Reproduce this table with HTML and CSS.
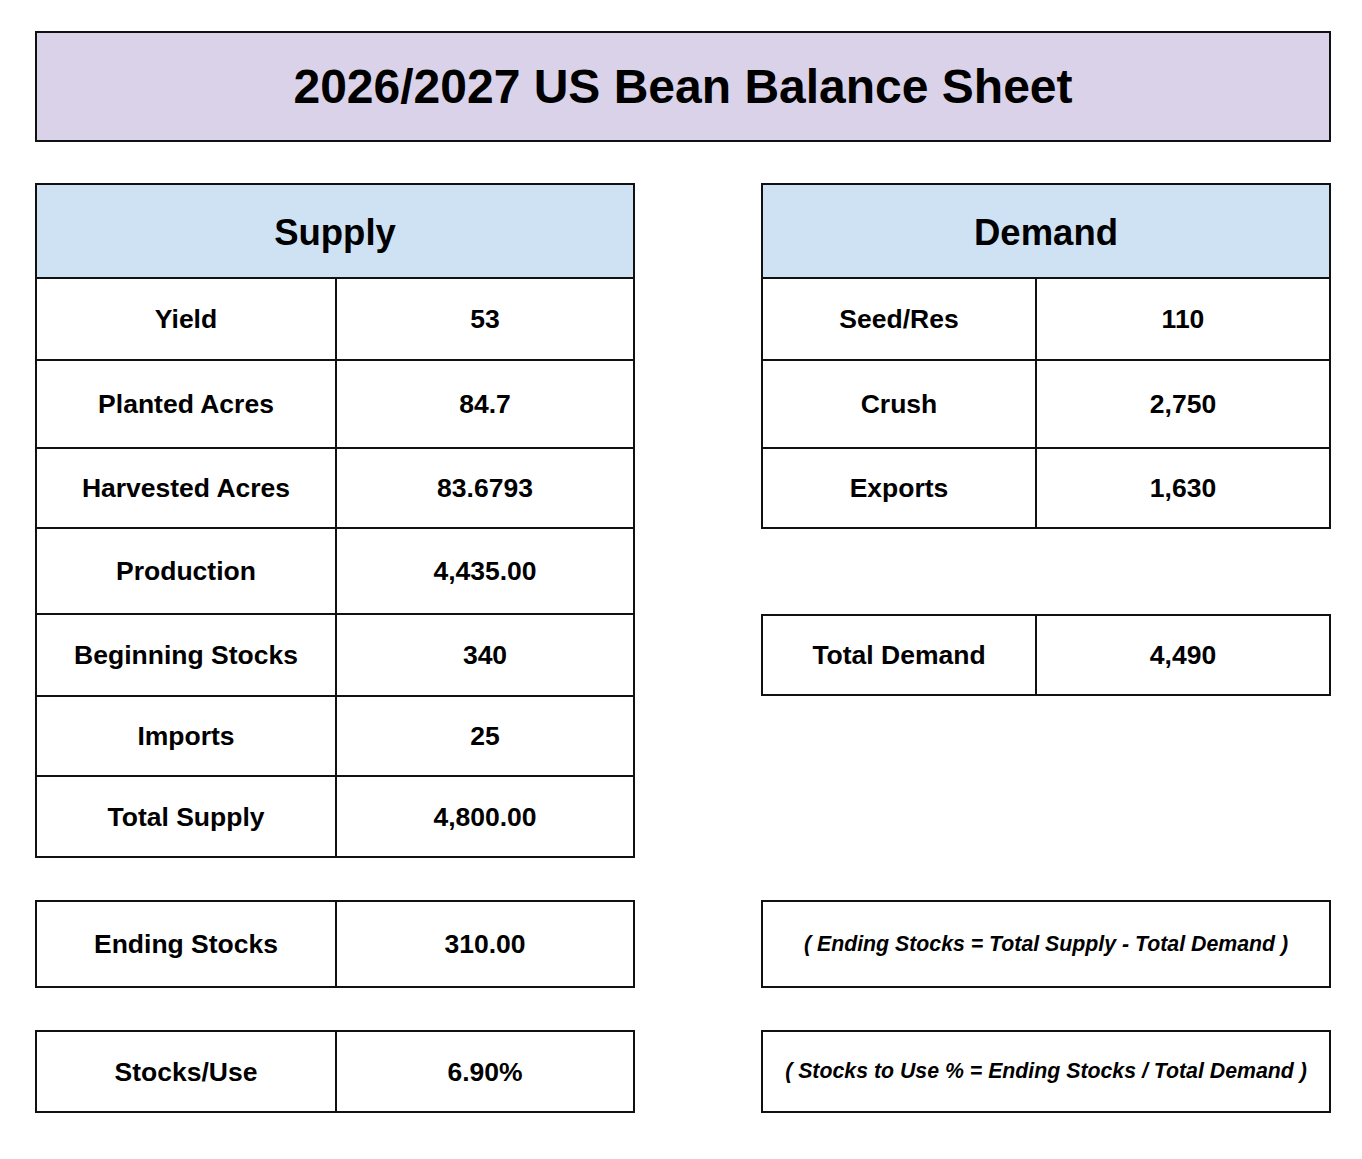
FILE: index.html
```html
<!DOCTYPE html>
<html lang="en">
<head>
<meta charset="utf-8">
<title>2026/2027 US Bean Balance Sheet</title>
<link rel="stylesheet" href="styles.css">
</head>
<body>
<div class="page">
  <div class="title">2026/2027 US Bean Balance Sheet</div>

  <div class="sheet">
    <div class="tbl">
      <div class="hdr">Supply</div>
      <div class="row sup h80"><div class="c">Yield</div><div class="c">53</div></div>
      <div class="row sup h86"><div class="c">Planted Acres</div><div class="c">84.7</div></div>
      <div class="row sup h78"><div class="c">Harvested Acres</div><div class="c">83.6793</div></div>
      <div class="row sup h84"><div class="c">Production</div><div class="c">4,435.00</div></div>
      <div class="row sup h80"><div class="c">Beginning Stocks</div><div class="c">340</div></div>
      <div class="row sup h78"><div class="c">Imports</div><div class="c">25</div></div>
      <div class="row sup h79"><div class="c">Total Supply</div><div class="c">4,800.00</div></div>
    </div>

    <div class="stack">
      <div class="tbl">
        <div class="hdr">Demand</div>
        <div class="row dem h80"><div class="c">Seed/Res</div><div class="c">110</div></div>
        <div class="row dem h86"><div class="c">Crush</div><div class="c">2,750</div></div>
        <div class="row dem h78"><div class="c">Exports</div><div class="c">1,630</div></div>
      </div>
      <div class="tbl total">
        <div class="row dem h78"><div class="c">Total Demand</div><div class="c">4,490</div></div>
      </div>
    </div>

    <div class="tbl">
      <div class="row sup h84"><div class="c">Ending Stocks</div><div class="c">310.00</div></div>
    </div>
    <div class="tbl">
      <div class="formula h84">( Ending Stocks = Total Supply - Total Demand )</div>
    </div>

    <div class="tbl">
      <div class="row sup h79"><div class="c">Stocks/Use</div><div class="c">6.90%</div></div>
    </div>
    <div class="tbl">
      <div class="formula h79">( Stocks to Use % = Ending Stocks / Total Demand )</div>
    </div>
  </div>
</div>
</body>
</html>
```

FILE: styles.css
```css
html, body {
  margin: 0;
  padding: 0;
  background: #ffffff;
}

body {
  font-family: "Liberation Sans", Arial, sans-serif;
  font-weight: bold;
  color: #000000;
}

.page {
  padding: 31px 0 0 35px;
}

.title {
  box-sizing: border-box;
  width: 1296px;
  height: 111px;
  border: 2px solid #111111;
  background: #d9d2e9;
  display: flex;
  align-items: center;
  justify-content: center;
  font-size: 48px;
}

.sheet {
  margin-top: 41px;
  display: grid;
  grid-template-columns: 600px 570px;
  column-gap: 126px;
  row-gap: 42px;
  align-items: start;
}

.stack {
  display: flex;
  flex-direction: column;
}

.tbl {
  border: 2px solid #111111;
  background: #ffffff;
}

.total {
  margin-top: 85px;
}

.hdr {
  box-sizing: border-box;
  height: 94px;
  padding-top: 3px;
  background: #cfe2f3;
  border-bottom: 2px solid #111111;
  display: flex;
  align-items: center;
  justify-content: center;
  font-size: 36.5px;
}

.row {
  display: grid;
}

.row.sup {
  grid-template-columns: 298px 1fr;
}

.row.dem {
  grid-template-columns: 272px 1fr;
}

.row + .row {
  border-top: 2px solid #111111;
}

.c {
  display: flex;
  align-items: center;
  justify-content: center;
  font-size: 26.5px;
  padding-top: 1px;
}

.c + .c {
  border-left: 2px solid #111111;
}

.formula {
  display: flex;
  align-items: center;
  justify-content: center;
  font-size: 21.3px;
  font-style: italic;
}

.h78 { height: 78px; }
.h79 { height: 79px; }
.h80 { height: 80px; }
.h84 { height: 84px; }
.h86 { height: 86px; }
```
